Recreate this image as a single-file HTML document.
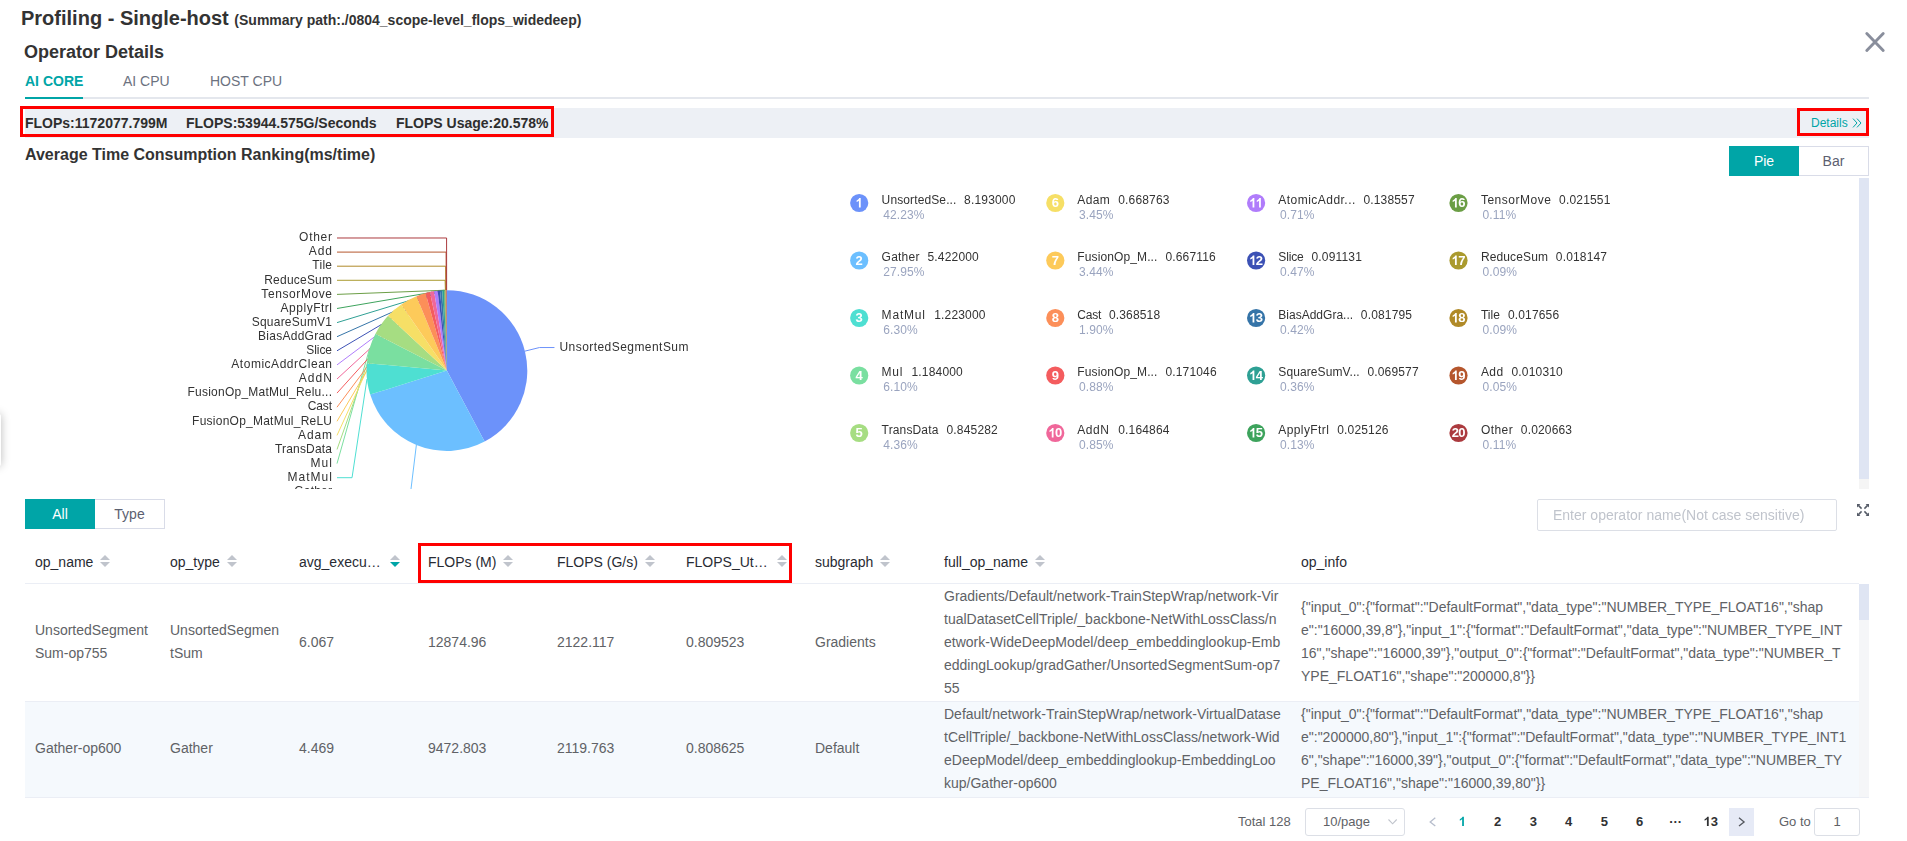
<!DOCTYPE html><html><head><meta charset="utf-8"><title>Profiling</title><style>
*{box-sizing:border-box;margin:0;padding:0}
html,body{width:1907px;height:841px;overflow:hidden;background:#fff}
body{font-family:"Liberation Sans",sans-serif;position:relative;color:#282b33}
#root{position:absolute;left:0;top:0;width:1907px;height:841px;overflow:hidden}
#g{position:absolute;left:0;top:0;width:1858px;height:489px;will-change:transform}
.a{position:absolute;white-space:nowrap}
.b{font-weight:bold}
.title{left:21px;top:6px;font-size:20px;line-height:24px;font-weight:bold;color:#333}
.title small{font-size:14px}
.h2{left:24px;top:41px;font-size:18px;line-height:22px;font-weight:bold;color:#333}
.tab{top:73px;font-size:14px;line-height:16px;color:#6c7280}
.tab.on{color:#00a5a7;font-weight:bold}
.tabline{left:25px;top:97px;width:1844px;height:2px;background:#e4e7ed}
.tabact{left:25px;top:97px;width:58px;height:2px;background:#00a5a7}
.flbar{left:25px;top:108px;width:1844px;height:30px;background:#edf0f5}
.fl{top:115px;font-size:14px;line-height:16px;font-weight:bold;color:#2e2e2e}
.red{border:3px solid #fe0000}
.det{left:1811px;top:116px;font-size:12px;line-height:14px;color:#00a5a7}
.h3{left:25px;top:146px;font-size:16px;line-height:18px;font-weight:bold;color:#333}
.btn{height:30px;line-height:28px;font-size:14px;text-align:center;border:1px solid #d9dce8;color:#5c6070;background:#fff}
.btn.on{background:#00a5a7;border-color:#00a5a7;color:#fff}
.sb{background:#dfe5f3}
.lg{font-size:12px;line-height:14px;color:#333}
.lgn{width:18.2px;height:18px;color:#fff;font-weight:bold;font-size:13px;line-height:18px;text-align:center;letter-spacing:-0.7px;text-indent:-0.7px}
.inp{left:1537px;top:499px;width:300px;height:32px;border:1px solid #dcdfe6;border-radius:2px;font-size:14px;line-height:30px;padding-left:15px;color:#c0c4cc}
.th{top:553px;font-size:14px;line-height:18px;color:#282b33}
.car{width:10px;height:12px}
.hl{left:25px;height:1px;background:#ebeef5}
.td{font-size:14px;line-height:23px;color:#606266}
.row2{left:25px;top:702px;width:1834px;height:95px;background:#f5f9fd}
.pg{font-size:13px;line-height:28px;top:808px;color:#606266}
.pn{font-weight:bold;color:#303133;width:36px;text-align:center}
.box{border:1px solid #dcdfe6;border-radius:3px;height:28px;background:#fff}
</style></head><body><div id="root"><div class="a title">Profiling - Single-host <small>(Summary path:./0804_scope-level_flops_widedeep)</small></div>
<div class="a h2">Operator Details</div>
<div class="a tab on" style="left:25px">AI CORE</div>
<div class="a tab" style="left:123px">AI CPU</div>
<div class="a tab" style="left:210px">HOST CPU</div>
<div class="a tabline"></div><div class="a tabact"></div>
<svg class="a" style="left:1863px;top:30px" width="24" height="24" viewBox="0 0 24 24"><path d="M3.8 3.5 L20.2 20.5 M20.2 3.5 L3.8 20.5" stroke="#898e9c" stroke-width="2.9" stroke-linecap="round" fill="none"/></svg>
<div class="a flbar"></div>
<div class="a fl" style="left:25px">FLOPs:1172077.799M</div>
<div class="a fl" style="left:186px">FLOPS:53944.575G/Seconds</div>
<div class="a fl" style="left:396px">FLOPS Usage:20.578%</div>
<div class="a red" style="left:20px;top:106px;width:534px;height:31px"></div>
<div class="a det">Details</div>
<svg class="a" style="left:1852px;top:117.5px" width="10" height="10" viewBox="0 0 10 10"><path d="M1 0.6L5 5L1 9.4M5 0.6L9 5L5 9.4" stroke="#00a5a7" stroke-width="1" fill="none"/></svg>
<div class="a red" style="left:1797px;top:108px;width:72px;height:28px"></div>
<div class="a h3">Average Time Consumption Ranking(ms/time)</div>
<div class="a btn on" style="left:1729px;top:146px;width:70px">Pie</div>
<div class="a btn" style="left:1799px;top:146px;width:70px;border-left:0">Bar</div>
<div class="a" style="left:1859px;top:178px;width:10px;height:311px;background:#f5f5f5"></div>
<div class="a sb" style="left:1859px;top:178px;width:10px;height:301px"></div>
<div id="g">
<svg style="position:absolute;left:25px;top:178px" width="810" height="310.7" viewBox="25 178 810 310.7"><g shape-rendering="geometricPrecision"><path d="M524.91,351.16L539.47,347.54L554.47,347.54" stroke="#6c92fa" fill="none" stroke-width="1"/><path d="M416.37,444.98L410.67,491.80L337.00,491.80" stroke="#6cbfff" fill="none" stroke-width="1"/><path d="M366.95,379.05L352.03,477.70L337.00,477.70" stroke="#4edfd2" fill="none" stroke-width="1"/><path d="M369.73,348.04L337.00,463.60L337.00,463.60" stroke="#7adfa0" fill="none" stroke-width="1"/><path d="M381.14,324.34L337.00,449.50L337.00,449.50" stroke="#a6dd82" fill="none" stroke-width="1"/><path d="M394.33,309.76L337.00,435.40L337.00,435.40" stroke="#f6df66" fill="none" stroke-width="1"/><path d="M408.62,299.90L337.00,421.30L337.00,421.30" stroke="#fdca5a" fill="none" stroke-width="1"/><path d="M420.95,294.50L337.00,407.20L337.00,407.20" stroke="#fc8f59" fill="none" stroke-width="1"/><path d="M427.69,292.53L337.00,393.10L337.00,393.10" stroke="#f45c5e" fill="none" stroke-width="1"/><path d="M431.97,291.60L337.00,379.00L337.00,379.00" stroke="#f0679a" fill="none" stroke-width="1"/><path d="M435.86,290.96L337.00,364.90L337.00,364.90" stroke="#b07cfb" fill="none" stroke-width="1"/><path d="M438.83,290.61L337.00,350.80L337.00,350.80" stroke="#3c51b5" fill="none" stroke-width="1"/><path d="M441.07,290.41L337.00,336.70L337.00,336.70" stroke="#3574a8" fill="none" stroke-width="1"/><path d="M443.04,290.29L337.00,322.60L337.00,322.60" stroke="#2ea094" fill="none" stroke-width="1"/><path d="M444.27,290.24L337.00,308.50L337.00,308.50" stroke="#3da35c" fill="none" stroke-width="1"/><path d="M444.88,290.23L337.00,294.40L337.00,294.40" stroke="#6b9e45" fill="none" stroke-width="1"/><path d="M445.40,290.21L445.12,280.30L337.00,280.30" stroke="#aa9a2e" fill="none" stroke-width="1"/><path d="M445.86,290.21L445.67,266.20L337.00,266.20" stroke="#b08a28" fill="none" stroke-width="1"/><path d="M446.23,290.20L446.10,252.10L337.00,252.10" stroke="#b5562d" fill="none" stroke-width="1"/><path d="M446.63,290.20L446.58,238.00L337.00,238.00" stroke="#ab3a3e" fill="none" stroke-width="1"/><path d="M446.90,370.60L446.90,290.20A80.4,80.4 0 0 1 484.62,441.60Z" fill="#6c92fa"/><path d="M446.90,370.60L484.62,441.60A80.4,80.4 0 0 1 370.17,394.61Z" fill="#6cbfff"/><path d="M446.90,370.60L370.17,394.61A80.4,80.4 0 0 1 366.85,363.15Z" fill="#4edfd2"/><path d="M446.90,370.60L366.85,363.15A80.4,80.4 0 0 1 375.44,333.75Z" fill="#7adfa0"/><path d="M446.90,370.60L375.44,333.75A80.4,80.4 0 0 1 388.07,315.80Z" fill="#a6dd82"/><path d="M446.90,370.60L388.07,315.80A80.4,80.4 0 0 1 401.22,304.44Z" fill="#f6df66"/><path d="M446.90,370.60L401.22,304.44A80.4,80.4 0 0 1 416.46,296.18Z" fill="#fdca5a"/><path d="M446.90,370.60L416.46,296.18A80.4,80.4 0 0 1 425.54,293.09Z" fill="#fc8f59"/><path d="M446.90,370.60L425.54,293.09A80.4,80.4 0 0 1 429.86,292.03Z" fill="#f45c5e"/><path d="M446.90,370.60L429.86,292.03A80.4,80.4 0 0 1 434.08,291.23Z" fill="#f0679a"/><path d="M446.90,370.60L434.08,291.23A80.4,80.4 0 0 1 437.65,290.73Z" fill="#b07cfb"/><path d="M446.90,370.60L437.65,290.73A80.4,80.4 0 0 1 440.01,290.50Z" fill="#3c51b5"/><path d="M446.90,370.60L440.01,290.50A80.4,80.4 0 0 1 442.14,290.34Z" fill="#3574a8"/><path d="M446.90,370.60L442.14,290.34A80.4,80.4 0 0 1 443.95,290.25Z" fill="#2ea094"/><path d="M446.90,370.60L443.95,290.25A80.4,80.4 0 0 1 444.60,290.23Z" fill="#3da35c"/><path d="M446.90,370.60L444.60,290.23A80.4,80.4 0 0 1 445.16,290.22Z" fill="#6b9e45"/><path d="M446.90,370.60L445.16,290.22A80.4,80.4 0 0 1 445.63,290.21Z" fill="#aa9a2e"/><path d="M446.90,370.60L445.63,290.21A80.4,80.4 0 0 1 446.09,290.20Z" fill="#b08a28"/><path d="M446.90,370.60L446.09,290.20A80.4,80.4 0 0 1 446.36,290.20Z" fill="#b5562d"/><path d="M446.90,370.60L446.36,290.20A80.4,80.4 0 0 1 446.90,290.20Z" fill="#ab3a3e"/></g><g font-family="Liberation Sans, sans-serif" font-size="12" fill="#333"><text x="332.0" y="241.00" text-anchor="end" textLength="32.9" lengthAdjust="spacing">Other</text><text x="332.0" y="255.00" text-anchor="end" textLength="23.2" lengthAdjust="spacing">Add</text><text x="332.0" y="269.00" text-anchor="end" textLength="19.7" lengthAdjust="spacing">Tile</text><text x="332.0" y="284.00" text-anchor="end" textLength="67.8" lengthAdjust="spacing">ReduceSum</text><text x="332.0" y="298.00" text-anchor="end" textLength="70.7" lengthAdjust="spacing">TensorMove</text><text x="332.0" y="312.00" text-anchor="end" textLength="51.4" lengthAdjust="spacing">ApplyFtrl</text><text x="332.0" y="326.00" text-anchor="end" textLength="80.3" lengthAdjust="spacing">SquareSumV1</text><text x="332.0" y="340.00" text-anchor="end" textLength="73.9" lengthAdjust="spacing">BiasAddGrad</text><text x="332.0" y="354.00" text-anchor="end" textLength="25.7" lengthAdjust="spacing">Slice</text><text x="332.0" y="368.00" text-anchor="end" textLength="100.7" lengthAdjust="spacing">AtomicAddrClean</text><text x="332.0" y="382.00" text-anchor="end" textLength="33.2" lengthAdjust="spacing">AddN</text><text x="332.0" y="396.00" text-anchor="end" textLength="144.5" lengthAdjust="spacing">FusionOp_MatMul_Relu...</text><text x="332.0" y="410.00" text-anchor="end" textLength="24.3" lengthAdjust="spacing">Cast</text><text x="332.0" y="425.00" text-anchor="end" textLength="139.9" lengthAdjust="spacing">FusionOp_MatMul_ReLU</text><text x="332.0" y="439.00" text-anchor="end" textLength="34.0" lengthAdjust="spacing">Adam</text><text x="332.0" y="453.00" text-anchor="end" textLength="57.1" lengthAdjust="spacing">TransData</text><text x="332.0" y="467.00" text-anchor="end" textLength="21.5" lengthAdjust="spacing">Mul</text><text x="332.0" y="481.00" text-anchor="end" textLength="44.6" lengthAdjust="spacing">MatMul</text><text x="332.0" y="495.00" text-anchor="end" textLength="37.8" lengthAdjust="spacing">Gather</text><text x="559.47" y="351" textLength="129" lengthAdjust="spacing">UnsortedSegmentSum</text></g></svg>
<svg class="a" style="left:0;top:0" width="1907" height="500" viewBox="0 0 1907 500"><circle cx="859.2" cy="203" r="9.1" fill="#6c92fa"/><circle cx="859.2" cy="260.5" r="9.1" fill="#6cbfff"/><circle cx="859.2" cy="318" r="9.1" fill="#4edfd2"/><circle cx="859.2" cy="375.5" r="9.1" fill="#7adfa0"/><circle cx="859.2" cy="433" r="9.1" fill="#a6dd82"/><circle cx="1055.3" cy="203" r="9.1" fill="#f6df66"/><circle cx="1055.3" cy="260.5" r="9.1" fill="#fdca5a"/><circle cx="1055.3" cy="318" r="9.1" fill="#fc8f59"/><circle cx="1055.3" cy="375.5" r="9.1" fill="#f45c5e"/><circle cx="1055.3" cy="433" r="9.1" fill="#f0679a"/><circle cx="1256.1" cy="203" r="9.1" fill="#b07cfb"/><circle cx="1256.1" cy="260.5" r="9.1" fill="#3c51b5"/><circle cx="1256.1" cy="318" r="9.1" fill="#3574a8"/><circle cx="1256.1" cy="375.5" r="9.1" fill="#2ea094"/><circle cx="1256.1" cy="433" r="9.1" fill="#3da35c"/><circle cx="1458.5" cy="203" r="9.1" fill="#6b9e45"/><circle cx="1458.5" cy="260.5" r="9.1" fill="#aa9a2e"/><circle cx="1458.5" cy="318" r="9.1" fill="#b08a28"/><circle cx="1458.5" cy="375.5" r="9.1" fill="#b5562d"/><circle cx="1458.5" cy="433" r="9.1" fill="#ab3a3e"/><g fill="#fff" font-family="Liberation Sans, sans-serif" font-size="13" font-weight="bold"><path transform="translate(855.59 207.40) scale(0.006348 -0.006348)" d="M806 0H525V1059Q371 915 162 846V1101Q272 1137 401 1237.5Q530 1338 578 1472H806Z"/><text x="855.59" y="264.90">2</text><text x="855.59" y="322.40">3</text><text x="855.59" y="379.90">4</text><text x="855.59" y="437.40">5</text><text x="1051.68" y="207.40">6</text><text x="1051.68" y="264.90">7</text><text x="1051.68" y="322.40">8</text><text x="1051.68" y="379.90">9</text><path transform="translate(1048.43 437.40) scale(0.006348 -0.006348)" d="M806 0H525V1059Q371 915 162 846V1101Q272 1137 401 1237.5Q530 1338 578 1472H806Z"/><text x="1054.93" y="437.40">0</text><path transform="translate(1249.23 207.40) scale(0.006348 -0.006348)" d="M806 0H525V1059Q371 915 162 846V1101Q272 1137 401 1237.5Q530 1338 578 1472H806Z"/><path transform="translate(1255.73 207.40) scale(0.006348 -0.006348)" d="M806 0H525V1059Q371 915 162 846V1101Q272 1137 401 1237.5Q530 1338 578 1472H806Z"/><path transform="translate(1249.23 264.90) scale(0.006348 -0.006348)" d="M806 0H525V1059Q371 915 162 846V1101Q272 1137 401 1237.5Q530 1338 578 1472H806Z"/><text x="1255.73" y="264.90">2</text><path transform="translate(1249.23 322.40) scale(0.006348 -0.006348)" d="M806 0H525V1059Q371 915 162 846V1101Q272 1137 401 1237.5Q530 1338 578 1472H806Z"/><text x="1255.73" y="322.40">3</text><path transform="translate(1249.23 379.90) scale(0.006348 -0.006348)" d="M806 0H525V1059Q371 915 162 846V1101Q272 1137 401 1237.5Q530 1338 578 1472H806Z"/><text x="1255.73" y="379.90">4</text><path transform="translate(1249.23 437.40) scale(0.006348 -0.006348)" d="M806 0H525V1059Q371 915 162 846V1101Q272 1137 401 1237.5Q530 1338 578 1472H806Z"/><text x="1255.73" y="437.40">5</text><path transform="translate(1451.63 207.40) scale(0.006348 -0.006348)" d="M806 0H525V1059Q371 915 162 846V1101Q272 1137 401 1237.5Q530 1338 578 1472H806Z"/><text x="1458.13" y="207.40">6</text><path transform="translate(1451.63 264.90) scale(0.006348 -0.006348)" d="M806 0H525V1059Q371 915 162 846V1101Q272 1137 401 1237.5Q530 1338 578 1472H806Z"/><text x="1458.13" y="264.90">7</text><path transform="translate(1451.63 322.40) scale(0.006348 -0.006348)" d="M806 0H525V1059Q371 915 162 846V1101Q272 1137 401 1237.5Q530 1338 578 1472H806Z"/><text x="1458.13" y="322.40">8</text><path transform="translate(1451.63 379.90) scale(0.006348 -0.006348)" d="M806 0H525V1059Q371 915 162 846V1101Q272 1137 401 1237.5Q530 1338 578 1472H806Z"/><text x="1458.13" y="379.90">9</text><text x="1451.63" y="437.40">2</text><text x="1458.13" y="437.40">0</text></g></svg>
<div class="a lg" style="left:881.6px;top:193px;letter-spacing:0.117px">UnsortedSe...</div>
<div class="a lg" style="left:964.1px;top:193px;letter-spacing:0.17px">8.193000</div>
<div class="a lg" style="left:883.2px;top:208px;letter-spacing:0.12px;color:#9aa4bf">42.23%</div>
<div class="a lg" style="left:881.6px;top:250px;letter-spacing:0.219px">Gather</div>
<div class="a lg" style="left:927.5px;top:250px;letter-spacing:0.17px">5.422000</div>
<div class="a lg" style="left:883.2px;top:265px;letter-spacing:0.12px;color:#9aa4bf">27.95%</div>
<div class="a lg" style="left:881.6px;top:308px;letter-spacing:0.809px">MatMul</div>
<div class="a lg" style="left:934.2px;top:308px;letter-spacing:0.17px">1.223000</div>
<div class="a lg" style="left:883.2px;top:323px;letter-spacing:0.12px;color:#9aa4bf">6.30%</div>
<div class="a lg" style="left:881.6px;top:365px;letter-spacing:0.752px">Mul</div>
<div class="a lg" style="left:911.5px;top:365px;letter-spacing:0.17px">1.184000</div>
<div class="a lg" style="left:883.2px;top:380px;letter-spacing:0.12px;color:#9aa4bf">6.10%</div>
<div class="a lg" style="left:881.6px;top:423px;letter-spacing:0.147px">TransData</div>
<div class="a lg" style="left:946.5px;top:423px;letter-spacing:0.17px">0.845282</div>
<div class="a lg" style="left:883.2px;top:438px;letter-spacing:0.12px;color:#9aa4bf">4.36%</div>
<div class="a lg" style="left:1077.3px;top:193px;letter-spacing:0.385px">Adam</div>
<div class="a lg" style="left:1118.2px;top:193px;letter-spacing:0.17px">0.668763</div>
<div class="a lg" style="left:1078.9px;top:208px;letter-spacing:0.12px;color:#9aa4bf">3.45%</div>
<div class="a lg" style="left:1077.3px;top:250px;letter-spacing:0.115px">FusionOp_M...</div>
<div class="a lg" style="left:1165.4px;top:250px;letter-spacing:0.17px">0.667116</div>
<div class="a lg" style="left:1078.9px;top:265px;letter-spacing:0.12px;color:#9aa4bf">3.44%</div>
<div class="a lg" style="left:1077.3px;top:308px;letter-spacing:-0.197px">Cast</div>
<div class="a lg" style="left:1108.9px;top:308px;letter-spacing:0.17px">0.368518</div>
<div class="a lg" style="left:1078.9px;top:323px;letter-spacing:0.12px;color:#9aa4bf">1.90%</div>
<div class="a lg" style="left:1077.3px;top:365px;letter-spacing:0.115px">FusionOp_M...</div>
<div class="a lg" style="left:1165.4px;top:365px;letter-spacing:0.17px">0.171046</div>
<div class="a lg" style="left:1078.9px;top:380px;letter-spacing:0.12px;color:#9aa4bf">0.88%</div>
<div class="a lg" style="left:1077.3px;top:423px;letter-spacing:0.542px">AddN</div>
<div class="a lg" style="left:1118.2px;top:423px;letter-spacing:0.17px">0.164864</div>
<div class="a lg" style="left:1078.9px;top:438px;letter-spacing:0.12px;color:#9aa4bf">0.85%</div>
<div class="a lg" style="left:1278.3px;top:193px;letter-spacing:0.471px">AtomicAddr...</div>
<div class="a lg" style="left:1363.4px;top:193px;letter-spacing:0.17px">0.138557</div>
<div class="a lg" style="left:1279.9px;top:208px;letter-spacing:0.12px;color:#9aa4bf">0.71%</div>
<div class="a lg" style="left:1278.3px;top:250px;letter-spacing:-0.163px">Slice</div>
<div class="a lg" style="left:1311.5px;top:250px;letter-spacing:0.17px">0.091131</div>
<div class="a lg" style="left:1279.9px;top:265px;letter-spacing:0.12px;color:#9aa4bf">0.47%</div>
<div class="a lg" style="left:1278.3px;top:308px;letter-spacing:0.007px">BiasAddGra...</div>
<div class="a lg" style="left:1360.8px;top:308px;letter-spacing:0.17px">0.081795</div>
<div class="a lg" style="left:1279.9px;top:323px;letter-spacing:0.12px;color:#9aa4bf">0.42%</div>
<div class="a lg" style="left:1278.3px;top:365px;letter-spacing:0.094px">SquareSumV...</div>
<div class="a lg" style="left:1367.4px;top:365px;letter-spacing:0.17px">0.069577</div>
<div class="a lg" style="left:1279.9px;top:380px;letter-spacing:0.12px;color:#9aa4bf">0.36%</div>
<div class="a lg" style="left:1278.3px;top:423px;letter-spacing:0.395px">ApplyFtrl</div>
<div class="a lg" style="left:1337.2px;top:423px;letter-spacing:0.17px">0.025126</div>
<div class="a lg" style="left:1279.9px;top:438px;letter-spacing:0.12px;color:#9aa4bf">0.13%</div>
<div class="a lg" style="left:1480.9px;top:193px;letter-spacing:0.522px">TensorMove</div>
<div class="a lg" style="left:1559.1px;top:193px;letter-spacing:0.17px">0.021551</div>
<div class="a lg" style="left:1482.5px;top:208px;letter-spacing:0.12px;color:#9aa4bf">0.11%</div>
<div class="a lg" style="left:1480.9px;top:250px;letter-spacing:0.128px">ReduceSum</div>
<div class="a lg" style="left:1555.8px;top:250px;letter-spacing:0.17px">0.018147</div>
<div class="a lg" style="left:1482.5px;top:265px;letter-spacing:0.12px;color:#9aa4bf">0.09%</div>
<div class="a lg" style="left:1480.9px;top:308px;letter-spacing:0.027px">Tile</div>
<div class="a lg" style="left:1507.9px;top:308px;letter-spacing:0.17px">0.017656</div>
<div class="a lg" style="left:1482.5px;top:323px;letter-spacing:0.12px;color:#9aa4bf">0.09%</div>
<div class="a lg" style="left:1480.9px;top:365px;letter-spacing:0.414px">Add</div>
<div class="a lg" style="left:1511.5px;top:365px;letter-spacing:0.17px">0.010310</div>
<div class="a lg" style="left:1482.5px;top:380px;letter-spacing:0.12px;color:#9aa4bf">0.05%</div>
<div class="a lg" style="left:1480.9px;top:423px;letter-spacing:0.457px">Other</div>
<div class="a lg" style="left:1520.8px;top:423px;letter-spacing:0.17px">0.020663</div>
<div class="a lg" style="left:1482.5px;top:438px;letter-spacing:0.12px;color:#9aa4bf">0.11%</div>
</div>
<div class="a" style="left:-9px;top:414px;width:10px;height:52px;background:#fff;border-radius:2px;box-shadow:0 0 10px rgba(0,0,0,.28)"></div>
<div class="a btn on" style="left:25px;top:499px;width:70px">All</div>
<div class="a btn" style="left:95px;top:499px;width:70px;border-left:0">Type</div>
<div class="a inp">Enter operator name(Not case sensitive)</div>
<svg class="a" style="left:1857px;top:504px" width="12" height="12" viewBox="0 0 12 12"><g fill="#555b67" stroke="#555b67" stroke-width="1.5"><path d="M0 0H3.4L0 3.4Z" stroke="none"/><path d="M1.4 1.4L4.6 4.6"/><path d="M12 0H8.6L12 3.4Z" stroke="none"/><path d="M10.6 1.4L7.4 4.6"/><path d="M0 12H3.4L0 8.6Z" stroke="none"/><path d="M1.4 10.6L4.6 7.4"/><path d="M12 12H8.6L12 8.6Z" stroke="none"/><path d="M10.6 10.6L7.4 7.4"/></g></svg>
<div class="a th" style="left:35px">op_name</div>
<svg class="a" style="left:100px;top:555px" width="10" height="12" viewBox="0 0 10 12"><path d="M0 5 L5 0 L10 5Z" fill="#c0c4cc"/><path d="M0 7 L5 12 L10 7Z" fill="#c0c4cc"/></svg>
<div class="a th" style="left:170px">op_type</div>
<svg class="a" style="left:227px;top:555px" width="10" height="12" viewBox="0 0 10 12"><path d="M0 5 L5 0 L10 5Z" fill="#c0c4cc"/><path d="M0 7 L5 12 L10 7Z" fill="#c0c4cc"/></svg>
<div class="a th" style="left:299px">avg_execu&hellip;</div>
<svg class="a" style="left:390px;top:555px" width="10" height="12" viewBox="0 0 10 12"><path d="M0 5 L5 0 L10 5Z" fill="#c0c4cc"/><path d="M0 7 L5 12 L10 7Z" fill="#00a5a7"/></svg>
<div class="a th" style="left:428px">FLOPs (M)</div>
<svg class="a" style="left:503px;top:555px" width="10" height="12" viewBox="0 0 10 12"><path d="M0 5 L5 0 L10 5Z" fill="#c0c4cc"/><path d="M0 7 L5 12 L10 7Z" fill="#c0c4cc"/></svg>
<div class="a th" style="left:557px">FLOPS (G/s)</div>
<svg class="a" style="left:645px;top:555px" width="10" height="12" viewBox="0 0 10 12"><path d="M0 5 L5 0 L10 5Z" fill="#c0c4cc"/><path d="M0 7 L5 12 L10 7Z" fill="#c0c4cc"/></svg>
<div class="a th" style="left:686px">FLOPS_Ut&hellip;</div>
<svg class="a" style="left:777px;top:555px" width="10" height="12" viewBox="0 0 10 12"><path d="M0 5 L5 0 L10 5Z" fill="#c0c4cc"/><path d="M0 7 L5 12 L10 7Z" fill="#c0c4cc"/></svg>
<div class="a th" style="left:815px">subgraph</div>
<svg class="a" style="left:880px;top:555px" width="10" height="12" viewBox="0 0 10 12"><path d="M0 5 L5 0 L10 5Z" fill="#c0c4cc"/><path d="M0 7 L5 12 L10 7Z" fill="#c0c4cc"/></svg>
<div class="a th" style="left:944px">full_op_name</div>
<svg class="a" style="left:1035px;top:555px" width="10" height="12" viewBox="0 0 10 12"><path d="M0 5 L5 0 L10 5Z" fill="#c0c4cc"/><path d="M0 7 L5 12 L10 7Z" fill="#c0c4cc"/></svg>
<div class="a th" style="left:1301px">op_info</div>
<div class="a red" style="left:418px;top:543px;width:374px;height:40px"></div>
<div class="a hl" style="top:583px;width:1834px"></div>
<div class="a row2"></div>
<div class="a hl" style="top:701px;width:1834px"></div>
<div class="a hl" style="top:797px;width:1844px"></div>
<div class="a" style="left:1859px;top:584px;width:10px;height:213px;background:#f5f6f8"></div>
<div class="a sb" style="left:1859px;top:584px;width:10px;height:36px"></div>
<div class="a td" style="left:35px;top:619px">UnsortedSegment<br>Sum-op755</div>
<div class="a td" style="left:170px;top:619px">UnsortedSegmen<br>tSum</div>
<div class="a td" style="left:299px;top:631px">6.067</div>
<div class="a td" style="left:428px;top:631px">12874.96</div>
<div class="a td" style="left:557px;top:631px">2122.117</div>
<div class="a td" style="left:686px;top:631px">0.809523</div>
<div class="a td" style="left:815px;top:631px">Gradients</div>
<div class="a td" style="left:944px;top:585px">Gradients/Default/network-TrainStepWrap/network-Vir<br>tualDatasetCellTriple/_backbone-NetWithLossClass/n<br>etwork-WideDeepModel/deep_embeddinglookup-Emb<br>eddingLookup/gradGather/UnsortedSegmentSum-op7<br>55</div>
<div class="a td" style="left:1301px;top:596px">{&quot;input_0&quot;:{&quot;format&quot;:&quot;DefaultFormat&quot;,&quot;data_type&quot;:&quot;NUMBER_TYPE_FLOAT16&quot;,&quot;shap<br>e&quot;:&quot;16000,39,8&quot;},&quot;input_1&quot;:{&quot;format&quot;:&quot;DefaultFormat&quot;,&quot;data_type&quot;:&quot;NUMBER_TYPE_INT<br>16&quot;,&quot;shape&quot;:&quot;16000,39&quot;},&quot;output_0&quot;:{&quot;format&quot;:&quot;DefaultFormat&quot;,&quot;data_type&quot;:&quot;NUMBER_T<br>YPE_FLOAT16&quot;,&quot;shape&quot;:&quot;200000,8&quot;}}</div>
<div class="a td" style="left:35px;top:737px">Gather-op600</div>
<div class="a td" style="left:170px;top:737px">Gather</div>
<div class="a td" style="left:299px;top:737px">4.469</div>
<div class="a td" style="left:428px;top:737px">9472.803</div>
<div class="a td" style="left:557px;top:737px">2119.763</div>
<div class="a td" style="left:686px;top:737px">0.808625</div>
<div class="a td" style="left:815px;top:737px">Default</div>
<div class="a td" style="left:944px;top:703px">Default/network-TrainStepWrap/network-VirtualDatase<br>tCellTriple/_backbone-NetWithLossClass/network-Wid<br>eDeepModel/deep_embeddinglookup-EmbeddingLoo<br>kup/Gather-op600</div>
<div class="a td" style="left:1301px;top:703px">{&quot;input_0&quot;:{&quot;format&quot;:&quot;DefaultFormat&quot;,&quot;data_type&quot;:&quot;NUMBER_TYPE_FLOAT16&quot;,&quot;shap<br>e&quot;:&quot;200000,80&quot;},&quot;input_1&quot;:{&quot;format&quot;:&quot;DefaultFormat&quot;,&quot;data_type&quot;:&quot;NUMBER_TYPE_INT1<br>6&quot;,&quot;shape&quot;:&quot;16000,39&quot;},&quot;output_0&quot;:{&quot;format&quot;:&quot;DefaultFormat&quot;,&quot;data_type&quot;:&quot;NUMBER_TY<br>PE_FLOAT16&quot;,&quot;shape&quot;:&quot;16000,39,80&quot;}}</div>
<div class="a pg" style="left:1238px">Total 128</div>
<div class="a box" style="left:1305px;top:808px;width:100px"></div>
<div class="a pg" style="left:1323px">10/page</div>
<svg class="a" style="left:1387px;top:818px" width="12" height="8" viewBox="0 0 12 8"><path d="M1.5 1.5L5.6 5.8L9.7 1.5" stroke="#c0c4cc" stroke-width="1.1" fill="none"/></svg>
<svg class="a" style="left:1428px;top:816px" width="10" height="12" viewBox="0 0 10 12"><path d="M7.3 1.8L2.2 5.9L7.3 10" stroke="#b6bdcc" stroke-width="1.3" fill="none"/></svg>
<div class="a pg pn" style="left:1479.7px">2</div>
<div class="a pg pn" style="left:1515.4px">3</div>
<div class="a pg pn" style="left:1550.7px">4</div>
<div class="a pg pn" style="left:1586.4px">5</div>
<div class="a pg pn" style="left:1621.7px">6</div>
<div class="a pg pn" style="left:1657.7px">···</div>
<svg class="a" style="left:1450px;top:808px" width="280" height="28" viewBox="1450 808 280 28"><g font-family="Liberation Sans, sans-serif" font-size="13" font-weight="bold"><path fill="#00a5a7" transform="translate(1458.8 826) scale(0.006348 -0.006348)" d="M806 0H525V1059Q371 915 162 846V1101Q272 1137 401 1237.5Q530 1338 578 1472H806Z"/><path fill="#303133" transform="translate(1703.6 826) scale(0.006348 -0.006348)" d="M806 0H525V1059Q371 915 162 846V1101Q272 1137 401 1237.5Q530 1338 578 1472H806Z"/><text fill="#303133" x="1710.83" y="826">3</text></g></svg>
<div class="a" style="left:1729px;top:808px;width:25px;height:28px;background:#e6eaf6"></div>
<svg class="a" style="left:1737px;top:816px" width="10" height="12" viewBox="0 0 10 12"><path d="M2 1.8L7.1 5.9L2 10" stroke="#55585f" stroke-width="1.3" fill="none"/></svg>
<div class="a pg" style="left:1779px">Go to</div>
<div class="a box" style="left:1814px;top:808px;width:46px"></div>
<div class="a pg" style="left:1814px;width:46px;text-align:center">1</div></div></body></html>
